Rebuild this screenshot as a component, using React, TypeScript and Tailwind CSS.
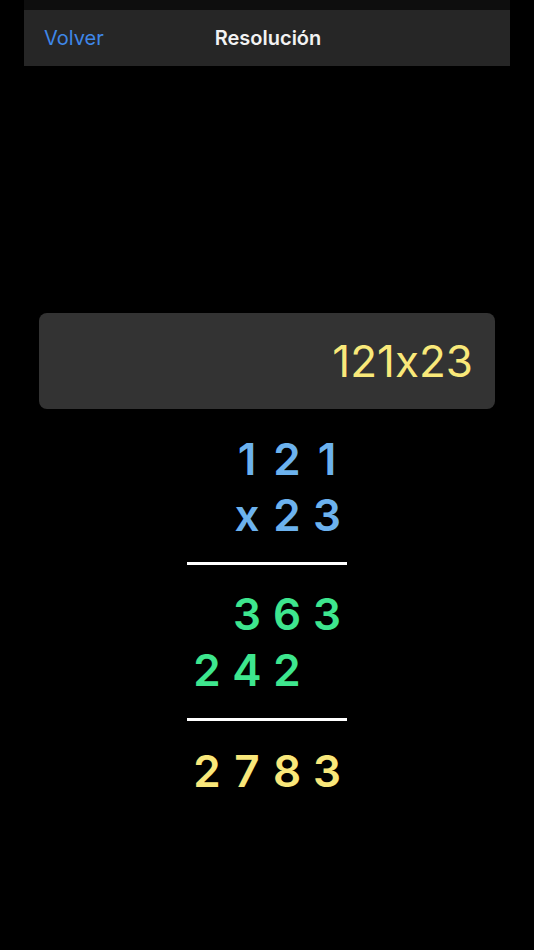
import React from "react";

const font = { fontFamily: "Inter, 'Noto Sans', sans-serif" };

function Row({ cells, color }: { cells: string[]; color: string }) {
  return (
    <div className={`grid grid-cols-4 h-[56px] items-center text-[44px] font-semibold ${color}`}>
      {cells.map((c, i) => (
        <div key={i} className="text-center leading-none">
          {c}
        </div>
      ))}
    </div>
  );
}

export default function App() {
  return (
    <div className="w-[534px] h-[950px] bg-black overflow-hidden [font-feature-settings:'calt'_0]" style={font}>
      <div className="mx-[24px] h-[10px] bg-[#0e0e0e]" />
      <div className="mx-[24px] h-[56px] bg-[#262626] relative flex items-center justify-center">
        <span className="absolute left-[20px] text-[20px] text-[#3f87e8]">Volver</span>
        <span className="text-[20px] font-semibold text-[#f2f2f2] pl-[2px]">Resolución</span>
      </div>
      <div className="mx-[39px] mt-[247px] h-[96px] rounded-lg bg-[#333333] flex items-center justify-end pr-[22px]">
        <span className="text-[44px] text-[#f9e97a] font-normal leading-none">121x23</span>
      </div>
      <div className="mx-auto w-[160px] mt-[22px]">
        <Row cells={["", "1", "2", "1"]} color="text-[#6cb2ee]" />
        <Row cells={["", "x", "2", "3"]} color="text-[#6cb2ee]" />
        <div className="h-[3px] bg-white mt-[19px] mb-[21px]" />
        <Row cells={["", "3", "6", "3"]} color="text-[#3ee68e]" />
        <Row cells={["2", "4", "2", ""]} color="text-[#3ee68e]" />
        <div className="h-[3px] bg-white mt-[20px] mb-[22px]" />
        <Row cells={["2", "7", "8", "3"]} color="text-[#f9e77a]" />
      </div>
    </div>
  );
}
